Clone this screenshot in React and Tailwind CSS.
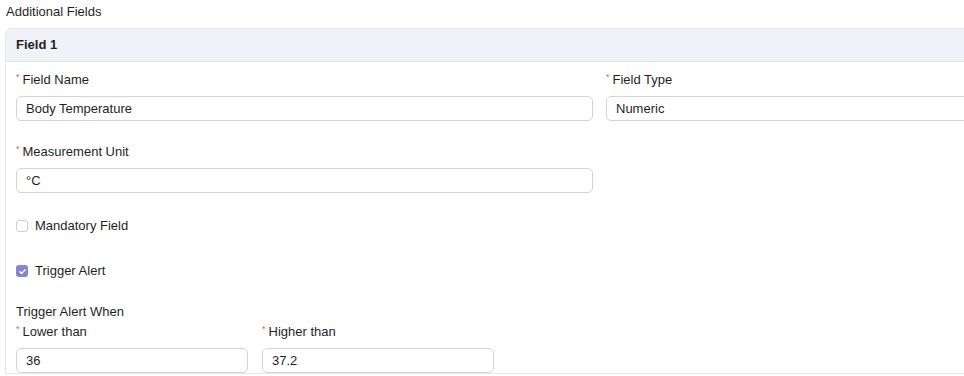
import React, { useState } from 'react';

const Label = ({ children, required }) => (
  <div className="flex items-start text-[13px] leading-4 text-[#1f1f1f] mb-[8px]">
    {required && <span className="text-[#ff4d4f] text-[9px] leading-3 mr-[3px] mt-[-1px]">*</span>}
    <span>{children}</span>
  </div>
);

const TextInput = ({ value, className = '' }) => (
  <input
    readOnly
    value={value}
    className={`h-[25px] w-full rounded-[5px] border border-[#d4d4d4] bg-white px-[9px] text-[13px] text-[#1f1f1f] outline-none ${className}`}
  />
);

const Check = ({ checked, label, onToggle }) => (
  <label className="flex items-center gap-[7px] text-[13px] leading-4 text-[#1f1f1f] cursor-pointer" onClick={onToggle}>
    {checked ? (
      <span className="flex h-[12px] w-[12px] items-center justify-center rounded-[3px] bg-[#8386cf]">
        <svg width="9" height="9" viewBox="0 0 10 10" fill="none">
          <path d="M2 5.2l2 2L8 3" stroke="white" strokeWidth="1.4" strokeLinecap="round" strokeLinejoin="round" />
        </svg>
      </span>
    ) : (
      <span className="h-[12px] w-[12px] rounded-[3px] border border-[#d0d0d0] bg-white" />
    )}
    <span>{label}</span>
  </label>
);

export default function App() {
  const [mandatory, setMandatory] = useState(false);
  const [trigger, setTrigger] = useState(true);

  return (
    <div className="h-[376px] w-[964px] overflow-hidden bg-white font-['Liberation_Sans',sans-serif]">
      <div className="px-[6px] pt-[4px] pb-[8px] text-[13px] leading-4 text-[#1f1f1f]">Additional Fields</div>
      <div className="ml-[5px] w-[1195px] rounded-t-[6px] border border-[#e6e6ec]">
        <div className="flex h-[33px] items-center rounded-t-[6px] border-b border-[#e6e6ec] bg-[#f1f2f7] px-[10px] text-[13px] font-bold text-[#1f1f1f]">
          Field 1
        </div>
        <div className="px-[10px] pt-[10px]">
          <div className="grid grid-cols-[577px_1fr] gap-x-[13px]">
            <div>
              <Label required>Field Name</Label>
              <TextInput value="Body Temperature" />
            </div>
            <div>
              <Label required>Field Type</Label>
              <TextInput value="Numeric" />
            </div>
          </div>
          <div className="mt-[23px] w-[577px]">
            <Label required>Measurement Unit</Label>
            <TextInput value="°C" />
          </div>
          <div className="mt-[25px]">
            <Check checked={mandatory} label="Mandatory Field" onToggle={() => setMandatory(!mandatory)} />
          </div>
          <div className="mt-[29px]">
            <Check checked={trigger} label="Trigger Alert" onToggle={() => setTrigger(!trigger)} />
          </div>
          <div className="mt-[25px] text-[13px] leading-4 text-[#1f1f1f] mb-[4px]">Trigger Alert When</div>
          <div className="flex gap-[14px]">
            <div className="w-[232px]">
              <Label required>Lower than</Label>
              <TextInput value="36" />
            </div>
            <div className="w-[232px]">
              <Label required>Higher than</Label>
              <TextInput value="37.2" />
            </div>
          </div>
        </div>
      </div>
    </div>
  );
}
